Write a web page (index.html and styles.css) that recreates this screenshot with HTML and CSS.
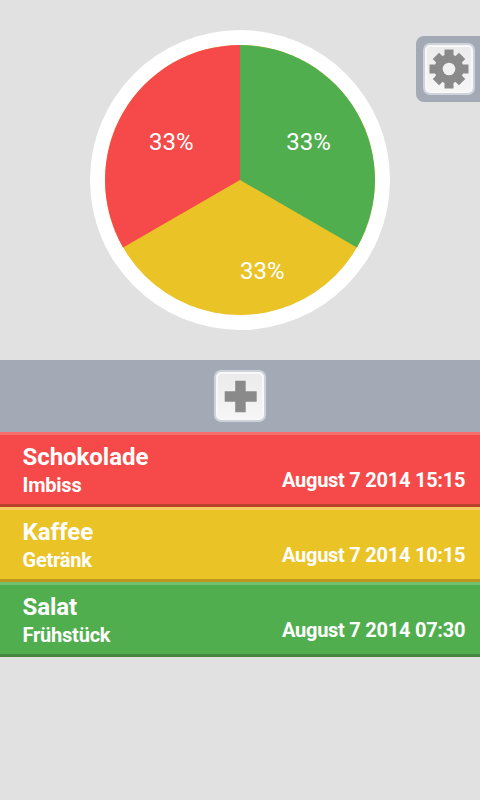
FILE: index.html
```html
<!DOCTYPE html>
<html lang="de">
<head>
<meta charset="utf-8">
<title>Tagebuch</title>
<link rel="stylesheet" href="styles.css">
</head>
<body>
<section class="chart">
  <svg width="300" height="300" viewBox="0 0 300 300">
    <circle cx="150" cy="150" r="150" fill="#fff"/>
    <circle cx="150" cy="150" r="135" fill="#eac327"/>
    <path fill="#51ae4f" d="M150 150V15A135 135 0 0 1 266.9 217.5Z"/>
    <path fill="#f54a49" d="M150 150V15A135 135 0 0 0 33.1 217.5Z"/>
    <g class="share">
      <text x="59" y="120" textLength="44.5">33%</text>
      <text x="196.300" y="120" textLength="44.5">33%</text>
      <text x="150" y="249" textLength="44.5">33%</text>
    </g>
  </svg>
  <div class="settings">
    <button class="key" aria-label="Einstellungen">
      <svg width="40" height="40" viewBox="-20 -20 40 40">
        <g fill="#8a8a8a">
          <path d="M-4.500-19.500h9v39h-9zM-19.500-4.500h39v9h-39z"/>
          <path transform="rotate(45)" d="M-4.500-18.500h9v37h-9zM-18.500-4.500h37v9h-37z"/>
          <circle r="14.500"/>
        </g>
        <circle r="6.300" fill="#f1f1f2"/>
      </svg>
    </button>
  </div>
</section>
<div class="toolbar">
  <button class="key" aria-label="Hinzufügen">
    <svg width="34" height="34" viewBox="-1.7 -1.7 34 34"><path fill="#8a8a8a" d="M10.500 0h10.500v10.500h11v10.500H21v10.500H10.500V21H0V10.500h10.500z"/></svg>
  </button>
</div>
<main>
  <article class="entry red"><div><h2>Schokolade</h2><p>Imbiss</p></div><time>August 7 2014 15:15</time></article>
  <article class="entry yellow"><div><h2>Kaffee</h2><p>Getränk</p></div><time>August 7 2014 10:15</time></article>
  <article class="entry green"><div><h2>Salat</h2><p>Frühstück</p></div><time>August 7 2014 07:30</time></article>
</main>
</body>
</html>
```
FILE: styles.css
```css
* { box-sizing: border-box; }
body { margin: 0; height: 800px; overflow: hidden; background: #e1e1e1; font-family: Roboto, sans-serif; color: #fff; }
.chart { position: relative; height: 360px; display: flex; justify-content: center; padding-top: 30px; }
.share { font-size: 24px; fill: #fff; }
.settings { position: absolute; right: -0.5px; top: 36px; width: 65px; height: 66px; padding: 7px; border-radius: 8px 0 0 8px; background: #a3aab5; }
.key { display: flex; align-items: center; justify-content: center; width: 52px; height: 52px; padding: 0; border: 2px solid #ced2d9; border-radius: 7px; background: linear-gradient(#ebebec, #f6f6f7); box-shadow: inset 0 0 0 2px #f8f8fa; }
.key svg { flex: none; }
.toolbar { height: 72px; display: flex; align-items: center; justify-content: center; background: #a3aab5; }
.entry { height: 75px; display: flex; justify-content: space-between; padding: 7px 14.800px 0 22.500px; border: 0 solid; border-width: 3px 0; }
.entry h2 { margin: 0; font-size: 24px; line-height: 30px; font-weight: 700; letter-spacing: -0.05px; }
.entry p { margin: 0; font-size: 20px; line-height: 26px; font-weight: 700; letter-spacing: -0.22px; }
.entry time { font-size: 20px; line-height: 26px; font-weight: 700; letter-spacing: -0.25px; margin-top: 25px; }
.red { background: #f54a49; border-top-color: #f76e6d; border-bottom-color: #b7412a; }
.yellow { background: #eac327; border-top-color: #f8c95e; border-bottom-color: #bd961e; }
.green { background: #51ae4f; border-top-color: #72c06d; border-bottom-color: #44883f; }
```
